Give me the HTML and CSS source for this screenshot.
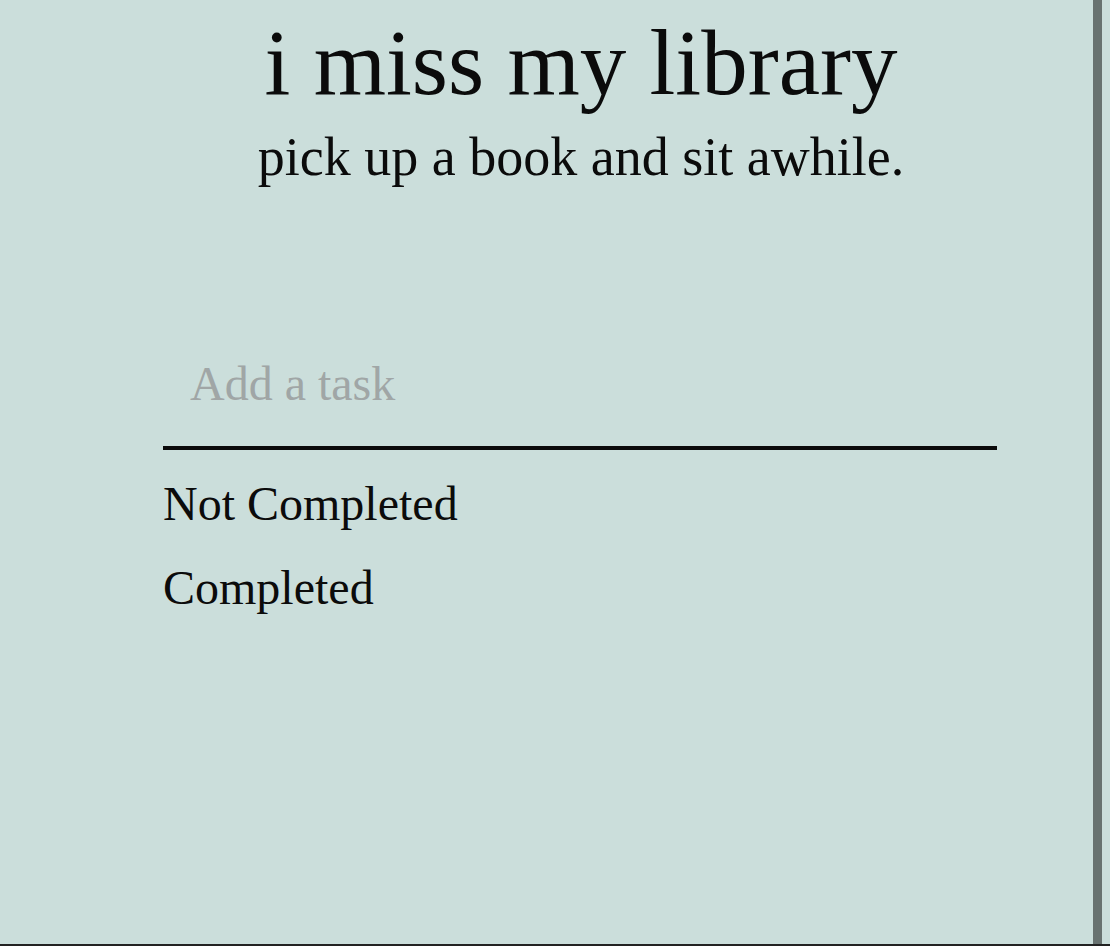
FILE: index.html
```html
<!DOCTYPE html>
<html lang="en">
<head>
<meta charset="utf-8">
<title>i miss my library</title>
<link rel="stylesheet" href="styles.css">
</head>
<body>
<div class="frame">
  <main class="app">
    <header class="hero">
      <h1 class="title">i miss my library</h1>
      <p class="subtitle">pick up a book and sit awhile.</p>
    </header>
    <section class="tasks">
      <input class="task-input" type="text" placeholder="Add a task">
      <div class="group">Not Completed</div>
      <div class="group">Completed</div>
    </section>
  </main>
  <div class="edge"></div>
  <div class="edge-gap"></div>
</div>
</body>
</html>
```

FILE: styles.css
```css
html, body {
  margin: 0;
  padding: 0;
  height: 100%;
}
body {
  background: #cbdedb;
  font-family: "Liberation Serif", "DejaVu Serif", serif;
  color: #0b0b0b;
}
.frame {
  display: flex;
  height: 946px;
  box-sizing: border-box;
  border-bottom: 2px solid #222;
}
.app {
  flex: 1;
  display: flex;
  flex-direction: column;
  padding-left: 163px;
  padding-right: 96px;
}
.hero {
  text-align: center;
  padding-top: 13px;
  padding-left: 2px;
}
.title {
  margin: 0;
  font-weight: normal;
  font-size: 93px;
  line-height: 100px;
}
.subtitle {
  margin: 14px 0 0;
  font-size: 54px;
  line-height: 60px;
}
.tasks {
  margin-top: 167px;
  display: flex;
  flex-direction: column;
}
.task-input {
  font-family: inherit;
  font-size: 48px;
  line-height: 60px;
  height: 60px;
  background: transparent;
  border: none;
  border-bottom: 4px solid #0b0b0b;
  padding: 0 27px 32px;
  outline: none;
  color: #111;
}
.task-input::placeholder {
  color: #a0a6a6;
}
.group {
  font-size: 48px;
  margin-top: 24px;
  line-height: 60px;
}
.edge {
  width: 9px;
  background: #687270;
}
.edge-gap {
  width: 8px;
}
```
